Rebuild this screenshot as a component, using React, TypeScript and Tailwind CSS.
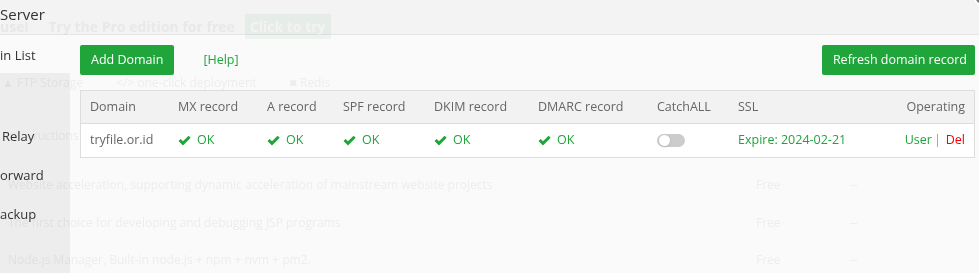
const font = { fontFamily: '"Open Sans", "Noto Sans", sans-serif' };

function CheckMark() {
  return (
    <svg width="13" height="11" viewBox="0 0 13 11" className="shrink-0">
      <path d="M0.5 6 L2.6 3.9 L5 6.3 L10.6 0.7 L12.7 2.8 L5 10.5 Z" fill="#20a53a" />
    </svg>
  );
}

function OkCell() {
  return (
    <div className="flex items-center gap-[6px] text-[#20a53a]">
      <CheckMark />
      <span>OK</span>
    </div>
  );
}

const columns = [
  { label: 'Domain', w: 'w-[88px]' },
  { label: 'MX record', w: 'w-[89px]' },
  { label: 'A record', w: 'w-[76px]' },
  { label: 'SPF record', w: 'w-[91px]' },
  { label: 'DKIM record', w: 'w-[104px]' },
  { label: 'DMARC record', w: 'w-[119px]' },
  { label: 'CatchALL', w: 'w-[81px]' },
  { label: 'SSL', w: 'w-[120px]' },
];

export default function App() {
  return (
    <div className="relative w-[979px] h-[273px] overflow-hidden bg-[#fafafa] text-[12.5px]" style={font}>
      {/* Header */}
      <header className="h-[35px] bg-[#f3f3f3] border-b border-[#e6e6e6] flex items-center">
        <h1 className="text-[15px] text-[#333] leading-none -mt-[6px]">Server</h1>
      </header>

      <div className="flex h-[238px]">
        {/* Sidebar */}
        <aside className="w-[70px] bg-[#ededed] flex flex-col text-[#333] overflow-hidden text-[13px]">
          <div className="h-[38px] shrink-0 bg-[#fafafa] flex items-center pt-[4px]">in List</div>
          <div className="h-[44px] shrink-0"></div>
          <div className="h-[39px] shrink-0 flex items-center pl-[2px]">Relay</div>
          <div className="h-[39px] shrink-0 flex items-center">orward</div>
          <div className="h-[39px] shrink-0 flex items-center">ackup</div>
        </aside>

        {/* Main */}
        <main className="flex-1 pl-[10px] pr-[4px] pt-[10px]">
          <div className="flex items-center justify-between h-[30px]">
            <div className="flex items-center">
              <button className="h-[30px] px-[11px] bg-[#20a53a] text-white rounded-[2px]">Add Domain</button>
              <a className="ml-[29px] text-[#20a53a]">[Help]</a>
            </div>
            <button className="h-[30px] pl-[11px] pr-[8px] bg-[#20a53a] text-white rounded-[2px]">Refresh domain record</button>
          </div>

          <div className="mt-[15px] border border-[#ddd]">
            <div className="flex h-[33px] items-center pt-[1px] bg-[#f2f2f2] border-b border-[#ddd] text-[#666]">
              {columns.map((c) => (
                <div key={c.label} className={`${c.w} px-[9px] shrink-0`}>{c.label}</div>
              ))}
              <div className="flex-1 px-[9px] text-right">Operating</div>
            </div>
            <div className="flex h-[33px] items-center bg-white text-[#666]">
              <div className="w-[88px] px-[9px] shrink-0">tryfile.or.id</div>
              <div className="w-[89px] px-[9px] shrink-0"><OkCell /></div>
              <div className="w-[76px] px-[9px] shrink-0"><OkCell /></div>
              <div className="w-[91px] px-[9px] shrink-0"><OkCell /></div>
              <div className="w-[104px] px-[9px] shrink-0"><OkCell /></div>
              <div className="w-[119px] px-[9px] shrink-0"><OkCell /></div>
              <div className="w-[81px] px-[9px] shrink-0">
                <div className="w-[28px] h-[13px] rounded-full bg-[#ccc] flex items-center pl-[2px]">
                  <div className="w-[11px] h-[11px] rounded-full bg-white shadow-sm"></div>
                </div>
              </div>
              <div className="w-[120px] px-[9px] shrink-0 text-[#20a53a] whitespace-nowrap">Expire: 2024-02-21</div>
              <div className="flex-1 px-[9px] text-right whitespace-nowrap">
                <a className="text-[#20a53a]">User</a>
                <span className="text-[#999] ml-[2px] mr-[5px]">|</span>
                <a className="text-[#f00]">Del</a>
              </div>
            </div>
          </div>
        </main>
      </div>

      {/* Faded page behind the layer, showing through */}
      <div className="pointer-events-none absolute inset-0 text-[12px] text-[#f2f2f2] mix-blend-multiply">
        <div className="absolute left-0 top-[14px] flex items-center font-bold text-[14px] text-[#f4f4f4]">
          <span>use!</span>
          <span className="ml-[20px]">Try the Pro edition for free</span>
          <span className="ml-[10px] px-[5px] py-[2px] bg-[#f2f8f3] text-white">Click to try</span>
        </div>
        <div className="absolute left-[2px] top-[74px] flex items-center gap-[3px]">
          <span>▲ FTP Storage</span>
          <span className="ml-[30px]">&lt;/&gt; one-click deployment</span>
          <span className="ml-[30px]">■ Redis</span>
        </div>
        <div className="absolute left-[33px] top-[127px] w-[46px] overflow-hidden whitespace-nowrap">ructions</div>
        <div className="absolute left-[8px] top-[176px]">Website acceleration, supporting dynamic acceleration of mainstream website projects</div>
        <div className="absolute left-[8px] top-[214px]">The first choice for developing and debugging JSP programs</div>
        <div className="absolute left-[8px] top-[251px]">Node.js Manager, Built-in node.js + npm + nvm + pm2.</div>
        <div className="absolute left-[756px] top-[176px]">Free</div>
        <div className="absolute left-[850px] top-[176px]">--</div>
        <div className="absolute left-[756px] top-[214px]">Free</div>
        <div className="absolute left-[850px] top-[214px]">--</div>
        <div className="absolute left-[756px] top-[251px]">Free</div>
        <div className="absolute left-[850px] top-[251px]">--</div>
      </div>

      {/* Close button peeking at corner */}
      <div className="absolute -right-[14px] -top-[14px] w-[20px] h-[20px] rounded-full bg-[#777] border-2 border-white"></div>
    </div>
  );
}
